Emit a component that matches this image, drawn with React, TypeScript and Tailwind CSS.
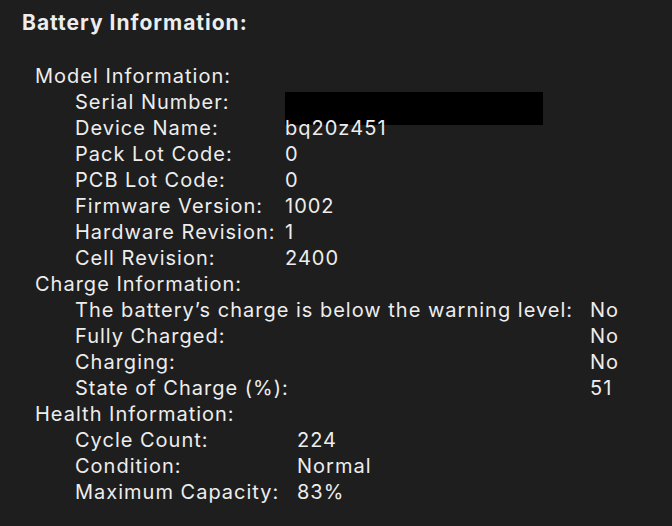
import React from "react";

type Row = { label: string; value?: React.ReactNode };

const modelRows: Row[] = [
  { label: "Serial Number:", value: <span className="mt-[3px] block h-[33px] w-[258px] bg-black" /> },
  { label: "Device Name:", value: "bq20z451" },
  { label: "Pack Lot Code:", value: "0" },
  { label: "PCB Lot Code:", value: "0" },
  { label: "Firmware Version:", value: "1002" },
  { label: "Hardware Revision:", value: "1" },
  { label: "Cell Revision:", value: "2400" },
];

const chargeRows: Row[] = [
  { label: "The battery\u2019s charge is below the warning level:", value: "No" },
  { label: "Fully Charged:", value: "No" },
  { label: "Charging:", value: "No" },
  { label: "State of Charge (%):", value: "51" },
];

const healthRows: Row[] = [
  { label: "Cycle Count:", value: "224" },
  { label: "Condition:", value: "Normal" },
  { label: "Maximum Capacity:", value: "83%" },
];

function Section({ title, rows, labelWidth }: { title: string; rows: Row[]; labelWidth: string }) {
  return (
    <div className="flex flex-col">
      <div className="pl-[35px]">{title}</div>
      {rows.map((row, i) => (
        <div key={i} className="flex h-[26px] pl-[75px]">
          <span className={`${labelWidth} shrink-0 whitespace-nowrap`}>{row.label}</span>
          <span className="whitespace-nowrap">{row.value}</span>
        </div>
      ))}
    </div>
  );
}

export default function App() {
  return (
    <div className="h-[526px] w-[672px] overflow-hidden bg-[#1e1e1e] pt-[10px] text-[20px] leading-[26px] tracking-[1px] text-[#ededed] [font-family:Inter,'Noto_Sans',sans-serif]">
      <div className="pl-[22px] text-[21px] font-bold">Battery Information:</div>
      <div className="mt-[27px] flex flex-col">
        <Section title="Model Information:" rows={modelRows} labelWidth="w-[210px]" />
        <Section title="Charge Information:" rows={chargeRows} labelWidth="w-[515px]" />
        <Section title="Health Information:" rows={healthRows} labelWidth="w-[222px]" />
      </div>
    </div>
  );
}
